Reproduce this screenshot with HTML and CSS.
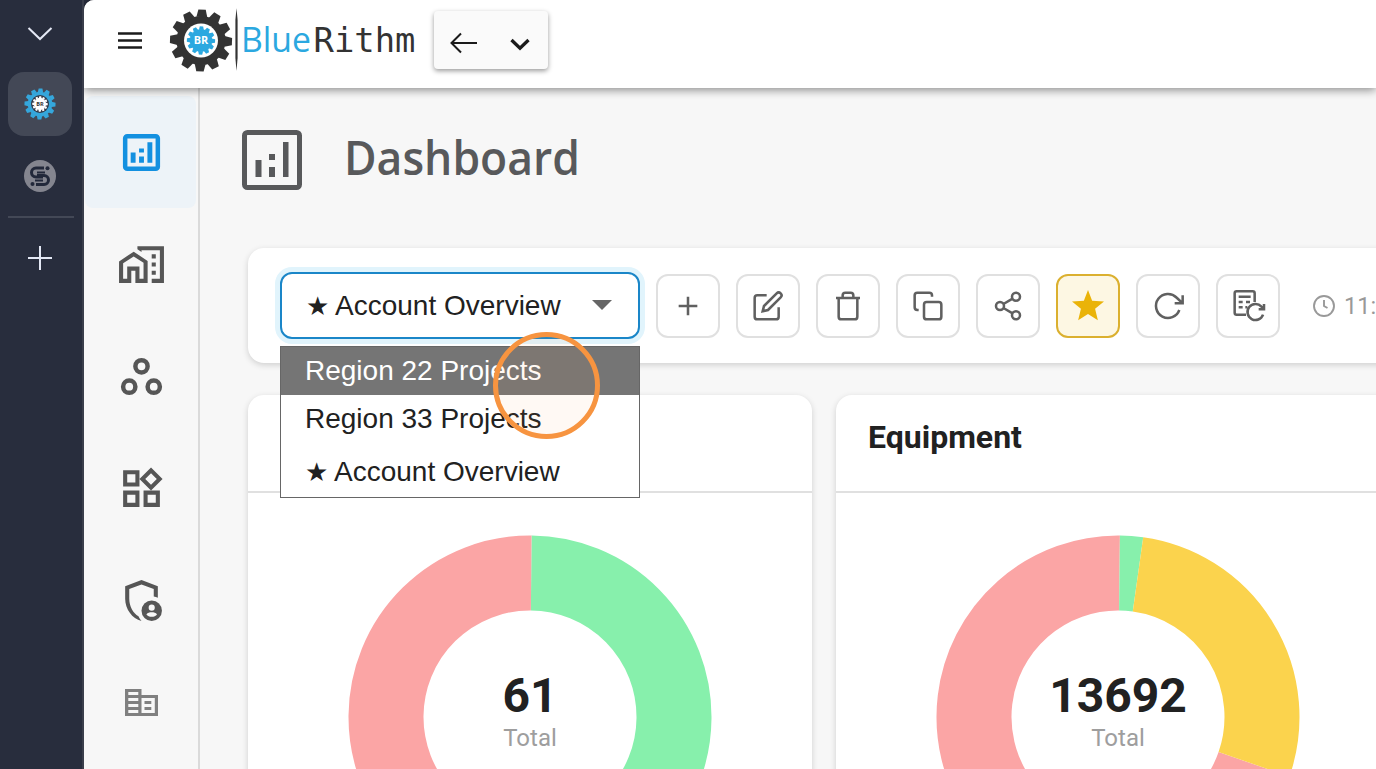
FILE: index.html
```html
<!DOCTYPE html>
<html lang="en">
<head>
<meta charset="utf-8">
<title>BlueRithm Dashboard</title>
<link rel="stylesheet" href="styles.css">
</head>
<body>
<svg class="defs" width="0" height="0" aria-hidden="true">
  <defs>
    <path id="tooth" d="M-5.400-23.500 L-3.700-31 H3.700 L5.400-23.500Z"/>
    <g id="gear">
      <circle r="24.600"/>
      <use href="#tooth" transform="rotate(2)"/><use href="#tooth" transform="rotate(32)"/>
      <use href="#tooth" transform="rotate(62)"/><use href="#tooth" transform="rotate(92)"/>
      <use href="#tooth" transform="rotate(122)"/><use href="#tooth" transform="rotate(152)"/>
      <use href="#tooth" transform="rotate(182)"/><use href="#tooth" transform="rotate(212)"/>
      <use href="#tooth" transform="rotate(242)"/><use href="#tooth" transform="rotate(272)"/>
      <use href="#tooth" transform="rotate(302)"/><use href="#tooth" transform="rotate(332)"/>
    </g>
    <g id="analytics">
      <rect x="4" y="4" width="16" height="16" rx="1" fill="none" stroke="currentColor" stroke-width="2.200"/>
      <path d="M6.700 12h2.400v5H6.700zM14.900 7h2.400v10h-2.400zM10.800 14h2.400v3h-2.400zM10.800 10h2.400v2h-2.400z"/>
    </g>
  </defs>
</svg>
<div class="frame">
  <aside class="browser-rail">
    <svg class="rail-chevron" width="26" height="16" viewBox="0 0 26 16"><path d="M1.500 2 13 13 24.500 2"/></svg>
    <div class="rail-tab">
      <svg width="32" height="32" viewBox="-32 -32 64 64">
        <use href="#gear" fill="#35a7dc"/><circle r="18" fill="#343b49"/>
        <use href="#gear" fill="#fff" transform="scale(.5)"/>
        <text class="gear-text" y="4" font-size="10" fill="#333" textLength="15" lengthAdjust="spacingAndGlyphs">BR</text>
      </svg>
    </div>
    <svg class="rail-site" width="32" height="32" viewBox="0 0 32 32">
      <circle cx="16" cy="16" r="16" fill="#84858f"/>
      <path d="M20 8H12a4.500 4.500 0 0 0 0 9H19M12 24.500H20a4.500 4.500 0 0 0 0-9H13" fill="none" stroke="#22283a" stroke-width="3"/>
      <path d="M13 12.500H21M11 20.500H19" fill="none" stroke="#22283a" stroke-width="1.800"/>
      <circle cx="23.500" cy="8.300" r="2" fill="#22283a"/><circle cx="8.500" cy="24" r="2" fill="#22283a"/>
    </svg>
    <div class="rail-line"></div>
    <svg class="rail-plus" width="24" height="24" viewBox="0 0 24 24"><path d="M12 0v24M0 12h24"/></svg>
  </aside>
  <div class="app">
    <header class="topbar">
      <svg class="menu" width="24" height="17" viewBox="0 0 24 17"><path d="M0 1.500h24M0 8.500h24M0 15.500h24"/></svg>
      <svg class="logo" width="250" height="70" viewBox="168 5 250 70">
        <g transform="translate(201 40.500)">
          <use href="#gear" fill="#333"/><circle r="17" fill="#fff"/>
          <use href="#gear" fill="#2ba8e0" transform="scale(.455)"/>
          <text class="gear-text" y="3.700" font-size="10" fill="#fff" textLength="14.500" lengthAdjust="spacingAndGlyphs">BR</text>
        </g>
        <path d="M236.500 8 237.600 20V58L236.500 71 235.400 58V20Z" fill="#333"/>
        <text class="brand-blue" x="241" y="51.500" textLength="70" lengthAdjust="spacingAndGlyphs">Blue</text>
        <text class="brand-dark" x="313.500" y="51.500" textLength="102" lengthAdjust="spacingAndGlyphs">Rithm</text>
      </svg>
      <div class="history">
        <svg width="28" height="22" viewBox="0 0 28 22"><path d="M27 11H2M11 1.500 1.500 11 11 20.500" fill="none" stroke="#1b1b1b" stroke-width="2"/></svg>
        <svg class="history-more" width="20" height="13" viewBox="0 0 20 13"><path d="M1.500 2 10 10.200 18.500 2" fill="none" stroke="#1b1b1b" stroke-width="3.300"/></svg>
      </div>
    </header>
    <div class="body">
      <nav class="nav">
        <a class="nav-item active"><svg width="49" height="49" viewBox="0 0 24 24"><use href="#analytics"/></svg></a>
        <a class="nav-item"><svg width="49" height="49" viewBox="0 0 24 24"><path d="M17 15h2v2h-2zM17 11h2v2h-2zM17 7h2v2h-2zM10 3v1.510l2 1.330V5h9v14h-4v2h6V3z"/><path fill-rule="evenodd" d="M8.170 5.700 15 10.250V21H9v-6H7v6H1V10.480zM3 11.380V19h2v-6h6v6h2v-7.840L8.170 8.090z"/></svg></a>
        <a class="nav-item"><svg width="49" height="49" viewBox="0 0 24 24"><g fill="none" stroke="currentColor" stroke-width="2.200"><circle cx="12" cy="7" r="3"/><circle cx="6" cy="17" r="3"/><circle cx="18" cy="17" r="3"/></g></svg></a>
        <a class="nav-item"><svg width="49" height="49" viewBox="0 0 24 24"><path fill-rule="evenodd" d="M16.660 4.520l2.830 2.830-2.830 2.830-2.830-2.830zM16.660 1.690 11 7.340 16.660 13l5.660-5.660zM3 3h8v8H3zM5 5v4h4V5zM13 13h8v8h-8zM15 15v4h4v-4zM3 13h8v8H3zM5 15v4h4v-4z"/></svg></a>
        <a class="nav-item"><svg width="49" height="49" viewBox="0 0 24 24"><path d="M20 10.600V5L12 2 4 5v6.090C4 16.140 7.410 20.850 12 22c-.6-.6-1.100-1.400-1.500-2.300C7.900 18.200 6 14.800 6 11.090V6.390l6-2.250 6 2.250v3.700c.7.100 1.400.3 2 .510z"/><circle cx="17" cy="17" r="5"/><circle cx="17" cy="15.500" r="1.500" fill="#f7f7f7"/><path d="M14.400 18.800c.6-.7 1.500-1 2.600-1s2 .3 2.600 1c-.6.800-1.500 1.200-2.600 1.200s-2-.4-2.600-1.200z" fill="#f7f7f7"/></svg></a>
        <a class="nav-item company"><svg width="33" height="27" viewBox="0 0 33 27"><path fill-rule="evenodd" d="M0 0H16.500V6H33V27H0ZM3.300 3V6H13.300V3ZM3.300 9v3h10V9ZM3.300 15v3h10v-3ZM3.300 21v3h10v-3ZM16.500 9V24H29.800V9Z"/><path d="M19.500 12h6.800v3h-6.800zM19.500 18h6.800v3h-6.800z"/></svg></a>
      </nav>
      <main class="main">
        <div class="page-title">
          <svg width="80" height="80" viewBox="0 0 80 80"><rect x="12.500" y="12.500" width="55" height="55" rx="3" fill="none" stroke="currentColor" stroke-width="5"/><path d="M23.500 40H29.500V57H23.500ZM37 47H43V57H37ZM37 34H43V40H37ZM51 22H56.500V57H51Z"/></svg>
          <h1>Dashboard</h1>
        </div>
        <section class="toolbar">
          <div class="picker">
            <div class="select"><span class="star">★</span><span class="select-label">Account Overview</span><i class="caret"></i></div>
            <ul class="options">
              <li class="option hovered">Region 22 Projects</li>
              <li class="option">Region 33 Projects</li>
              <li class="option starred"><span class="star">★</span>Account Overview</li>
            </ul>
            <div class="click-ring"></div>
          </div>
          <button class="tool"><svg viewBox="0 0 24 24"><path d="M12 5v14M5 12h14"/></svg></button>
          <button class="tool"><svg viewBox="0 0 24 24"><path d="M11 4H4a2 2 0 0 0-2 2v14a2 2 0 0 0 2 2h14a2 2 0 0 0 2-2v-7M18.500 2.500a2.120 2.120 0 0 1 3 3L12 15l-4 1 1-4z"/></svg></button>
          <button class="tool"><svg viewBox="0 0 24 24"><path d="M3 6h18M19 6v14a2 2 0 0 1-2 2H7a2 2 0 0 1-2-2V6M8 6V4a2 2 0 0 1 2-2h4a2 2 0 0 1 2 2v2"/></svg></button>
          <button class="tool"><svg viewBox="0 0 24 24"><rect x="9" y="9" width="13" height="13" rx="2"/><path d="M5 15H4a2 2 0 0 1-2-2V4a2 2 0 0 1 2-2h9a2 2 0 0 1 2 2v1"/></svg></button>
          <button class="tool"><svg viewBox="0 0 24 24"><circle cx="18" cy="5" r="3"/><circle cx="6" cy="12" r="3"/><circle cx="18" cy="19" r="3"/><path d="M8.590 13.510l6.830 3.980M15.410 6.510l-6.820 3.980"/></svg></button>
          <button class="tool favorite"><svg viewBox="0 0 24 24"><path d="M12 0l3.100 8 8.900.6-6.700 5.500 2.100 8.600L12 18 4.600 22.700l2.100-8.600L0 8.600 8.900 8z"/></svg></button>
          <button class="tool"><svg viewBox="0 0 24 24"><path d="M23 4v6h-6M20.490 15a9 9 0 1 1-2.120-9.360L23 10"/></svg></button>
          <button class="tool"><svg viewBox="0 0 24 24"><path d="M10.500 18.500H3.500a1.500 1.500 0 0 1-1.500-1.500V2.500A1.500 1.500 0 0 1 3.500 1H15.500A1.500 1.500 0 0 1 17 2.500V9M5 5h9M5 9h3M10.500 9h3M5 13h3M10 13h1.500M24 10.500v4h-4M23.300 18.500a6 6 0 1 1-1.200-6l1.900 1.800"/></svg></button>
          <div class="updated"><svg width="24" height="24" viewBox="0 0 24 24"><circle cx="12" cy="12" r="10"/><path d="M12 6v6l3.500 2"/></svg><span>11:</span></div>
        </section>
        <div class="cards">
          <section class="card">
            <div class="card-head"></div>
            <div class="chart">
              <svg width="364" height="364" viewBox="-182 -182 364 364">
                <path d="M1.200-144A144 144 0 0 1-1.200 144" stroke="#87f0ac"/>
                <path d="M-1.200 144A144 144 0 0 1 1.200-144" stroke="#fba5a5"/>
              </svg>
              <div class="total"><strong>61</strong><span>Total</span></div>
            </div>
          </section>
          <section class="card">
            <div class="card-head"><h2>Equipment</h2></div>
            <div class="chart">
              <svg width="364" height="364" viewBox="-182 -182 364 364">
                <path d="M136 47.300A144 144 0 1 1 1.500-144" stroke="#fba5a5"/>
                <path d="M1.500-144A144 144 0 0 1 20-142.600" stroke="#87f0ac"/>
                <path d="M20-142.600A144 144 0 0 1 136 47.300" stroke="#fbd34d"/>
              </svg>
              <div class="total"><strong>13692</strong><span>Total</span></div>
            </div>
          </section>
        </div>
      </main>
    </div>
  </div>
</div>
</body>
</html>
```
FILE: styles.css
```css
* { box-sizing: border-box; }
body { margin: 0; overflow: hidden; font-family: Roboto, "Liberation Sans", sans-serif; color: #212121; }
svg { display: block; flex: none; }
.defs { position: absolute; }
.frame { display: flex; width: 1376px; height: 769px; overflow: hidden; background: #282d3d; }

/* Browser rail */
.browser-rail { width: 84px; flex: none; display: flex; flex-direction: column; align-items: flex-start; border-right: 2px solid #3a3e4b; }
.rail-chevron { margin: 26px 0 0 27px; fill: none; stroke: #e4e8f5; stroke-width: 2; }
.rail-tab { width: 64px; height: 64px; margin: 30px 0 0 8px; border-radius: 16px; background: #434856; display: grid; place-items: center; }
.gear-text { font-family: "Open Sans", sans-serif; font-weight: 700; text-anchor: middle; }
.rail-site { margin: 24px 0 0 24px; }
.rail-line { width: 66px; height: 2px; margin: 24px 0 0 8px; background: #434856; }
.rail-plus { margin: 28px 0 0 28px; stroke: #e4e8f5; stroke-width: 2; }

/* Application shell */
.app { flex: 1; min-width: 0; display: flex; flex-direction: column; background: #f7f7f7; border-top-left-radius: 10px; }
.topbar { height: 88px; flex: none; position: relative; z-index: 1; display: flex; align-items: flex-start; background: #fff; border-top-left-radius: 10px; box-shadow: 0 2px 10px rgba(0, 0, 0, .45); clip-path: inset(0 0 -16px 0); }
.menu { margin: 32px 0 0 34px; stroke: #1b1b1b; stroke-width: 2.500px; }
.logo { margin: 5px 0 0 26px; }
.brand-blue { font: 34px "Open Sans", sans-serif; fill: #2ba8e0; }
.brand-dark { font: 33px "DejaVu Sans Mono", monospace; fill: #333; }
.history { width: 114px; height: 58px; margin: 11px 0 0 16px; padding: 5px 18px 0 16px; display: flex; align-items: center; justify-content: space-between; background: #fafafa; border-radius: 4px; box-shadow: 0 2px 5px rgba(0, 0, 0, .4); }
.history-more { margin-top: 4px; }
.body { flex: 1; display: flex; min-height: 0; }
.nav { width: 116px; flex: none; padding: 8px 2px 0 1px; border-right: 2px solid #dadada; color: #565656; }
.nav-item { height: 112px; display: flex; align-items: center; padding-left: 31.500px; border-radius: 8px; }
.nav-item svg { fill: currentColor; }
.nav-item.active { background: #edf3f8; color: #1390e0; }
.nav-item.company { height: 93px; padding-left: 39.500px; color: #808080; }

/* Main area */
.main { flex: 1; min-width: 0; padding-left: 48px; overflow: hidden; }
.page-title { display: flex; align-items: center; height: 144px; margin-left: -16px; color: #58595b; }
.page-title svg { fill: currentColor; }
.page-title h1 { margin: 0 0 7px 32px; font: 600 47.500px/64px "Open Sans", sans-serif; transform: scaleX(.937); transform-origin: left; }
.toolbar { width: 1200px; height: 115px; margin-top: 16px; padding: 0 32px; display: flex; align-items: center; gap: 16px; background: #fff; border-radius: 16px; box-shadow: 0 2px 6px rgba(0, 0, 0, .16); }
.picker { position: relative; z-index: 2; width: 360px; flex: none; font: 28px "Liberation Sans", Arial, sans-serif; }
.select { height: 67px; padding: 0 26px 0 24px; display: flex; align-items: center; border: 2px solid #1a86c8; border-radius: 12px; background: #fff; box-shadow: 0 0 0 5px #e1f4fc; }
.select-label { flex: 1; }
.star { display: inline-block; width: 29px; font: 26px/1 "DejaVu Sans", sans-serif; }
.caret { margin-bottom: 2px; border: 10px solid transparent; border-top-color: #666; border-bottom: 0; }
.options { position: absolute; left: 0; top: 74px; width: 360px; height: 152px; margin: 0; padding: 0; list-style: none; background: #fff; border: 1px solid #666; }
.option { height: 48px; line-height: 48px; padding-left: 24px; white-space: nowrap; }
.option.hovered { background: #757575; color: #fff; }
.option.starred { height: 54px; line-height: 58px; padding-left: 24px; }
.click-ring { position: absolute; left: 213px; top: 60px; width: 107px; height: 107px; border: 5px solid #f79440; border-radius: 50%; background: rgba(247, 148, 64, .06); }
.tool { width: 64px; height: 64px; flex: none; padding: 0; display: grid; place-items: center; background: #fff; border: 2px solid #e0e0e0; border-radius: 12px; }
.tool svg { width: 32px; height: 32px; overflow: visible; fill: none; stroke: #606060; stroke-width: 1.900; }
.tool.favorite { border-color: #dbb02f; background: #fdf7e3; }
.tool.favorite svg { fill: #eab308; stroke: none; }
.updated { margin-left: 16px; display: flex; align-items: center; gap: 8px; font-size: 23.500px; color: #999; }
.updated svg { fill: none; stroke: #999; stroke-width: 1.900; }

/* Charts */
.cards { display: flex; gap: 24px; margin-top: 32px; }
.card { width: 564px; height: 600px; flex: none; background: #fff; border-radius: 16px; box-shadow: 0 2px 6px rgba(0, 0, 0, .16); }
.card-head { height: 98px; padding: 22px 32px; border-bottom: 2px solid #e0e0e0; }
.card-head h2 { margin: 0; font: 700 32px/40px Roboto, sans-serif; }
.chart { display: grid; justify-content: center; padding-top: 42px; }
.chart svg, .total { grid-area: 1 / 1; }
.chart svg path { fill: none; stroke-width: 75px; }
.total { display: flex; flex-direction: column; align-items: center; padding-top: 133px; z-index: 1; }
.total strong { font-size: 48px; line-height: 56px; }
.total span { font-size: 24px; line-height: 28px; color: #9e9e9e; }
```
